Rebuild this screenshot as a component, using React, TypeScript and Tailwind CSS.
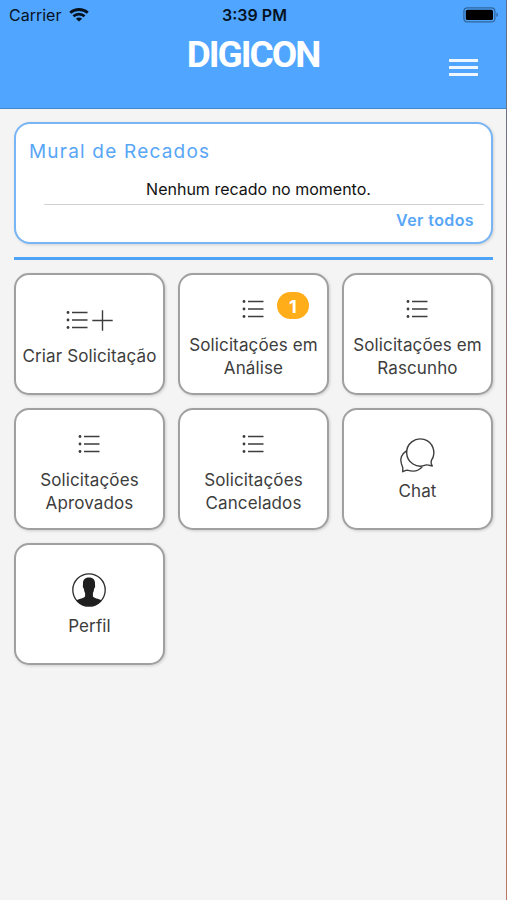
import type { ReactNode } from "react";

function WifiIcon() {
  return (
    <svg width="20" height="14" viewBox="0 0 20 14" fill="none" stroke="#06121f" strokeWidth="2.8">
      <path d="M1.2 4.7C6 0.4 14 0.4 18.8 4.7" />
      <path d="M4.4 8.3c3.200-2.900 8-2.900 11.200 0" />
      <path d="M10 13.600 6.900 10.700c1.800-1.600 4.400-1.600 6.200 0z" fill="#06121f" stroke="none" />
    </svg>
  );
}

function BatteryIcon() {
  return (
    <svg width="37" height="16" viewBox="0 0 37 16">
      <rect x="0.9" y="0.9" width="31" height="14" rx="3.5" fill="none" stroke="#2f659d" strokeWidth="1.2" />
      <rect x="2.8" y="2.7" width="27.2" height="10.4" rx="1.6" fill="#000" />
      <path d="M33.4 5.8c2 .6 2 3.6 0 4.2z" fill="#2f659d" />
    </svg>
  );
}

function ListIcon() {
  return (
    <svg width="22" height="20" viewBox="0 0 22 20" stroke="#3d3d3d" strokeWidth="1.4">
      <path d="M6 2.5h15.5M6 10h15.5M6 17.5h15.5" />
      <g fill="#3d3d3d" stroke="none">
        <circle cx="2" cy="2.5" r="1.4" />
        <circle cx="2" cy="10" r="1.4" />
        <circle cx="2" cy="17.5" r="1.4" />
      </g>
    </svg>
  );
}

function PlusIcon() {
  return (
    <svg width="21" height="21" viewBox="0 0 21 21" stroke="#3d3d3d" strokeWidth="1.4">
      <path d="M10.5 0.3v20.4M0.3 10.5h20.4" />
    </svg>
  );
}

function ChatIcon() {
  return (
    <svg
      className="overflow-visible"
      width="34"
      height="34"
      viewBox="0 0 34 34"
      fill="none"
      stroke="#3d3d3d"
      strokeWidth="1.4"
      strokeLinejoin="round"
    >
      <path d="M32.2 28c-1.200-1.700-1.500-3.600-.8-5.700A13.600 13.600 0 1 0 25.400 27.100c2.400-.7 4.400.4 6.800.9z" />
      <path d="M6.400 12.800C1.600 15.800-.6 21.500 1.500 26c1.400 2.600 1.700 4.500 1.200 7.700 1.500-.3 3-1.700 4.600-1.600 6.200 2 11.600.8 15-3.500" />
    </svg>
  );
}

function ProfileIcon() {
  return (
    <svg width="34" height="34" viewBox="0 0 34 34">
      <circle cx="17" cy="17" r="16.2" fill="#fff" stroke="#2b2b2b" strokeWidth="1.3" />
      <path
        d="M17 4.600c-4.300 0-6.300 2.600-6 6.400.1 1-.4 1.500-.1 2.700.2 1.200.9 1.600 1.100 2.500.2 1.800.5 2.800 1.100 3.700v3.400c-.8 2.200-5.600 2.300-8.700 4.100A16 16 0 0 0 17 33a16 16 0 0 0 12.600-5.600c-3.100-1.800-7.900-1.900-8.700-4.100v-3.400c.6-.9.900-1.900 1.100-3.700.2-.9.900-1.300 1.100-2.500.3-1.200-.2-1.700-.1-2.700.3-3.800-1.700-6.400-6-6.400z"
        fill="#1f1f1f"
      />
    </svg>
  );
}

type TileProps = {
  label: string;
  icon: ReactNode;
  badge?: number;
};

function Tile({ label, icon, badge }: TileProps) {
  return (
    <button className="flex h-[122px] flex-col items-center justify-center rounded-[15px] border-2 border-[#a0a0a0] bg-white px-1 pt-[3px] shadow-[1px_1px_3px_rgba(0,0,0,0.16)]">
      <span className="relative right-[0.5px] flex h-[34px] items-center gap-1">
        {icon}
        {badge !== undefined && (
          <span className="absolute top-0 left-[35px] flex h-[27px] w-[32px] items-center justify-center rounded-full bg-[#ffad18] pt-[3px] text-[18px] leading-[24px] font-bold text-white">
            {badge}
          </span>
        )}
      </span>
      <span className="mt-[8px] text-[17px] leading-[23px] tracking-[0.12px] text-[#3d3d3d]">{label}</span>
    </button>
  );
}

const tiles: TileProps[] = [
  { label: "Criar Solicitação", icon: <><ListIcon /><PlusIcon /></> },
  { label: "Solicitações em Análise", icon: <ListIcon />, badge: 1 },
  { label: "Solicitações em Rascunho", icon: <ListIcon /> },
  { label: "Solicitações Aprovados", icon: <ListIcon /> },
  { label: "Solicitações Cancelados", icon: <ListIcon /> },
  { label: "Chat", icon: <ChatIcon /> },
  { label: "Perfil", icon: <ProfileIcon /> },
];

export default function App() {
  return (
    <div className="flex h-[900px] w-[507px] overflow-hidden bg-[#f4f4f4] font-['Inter',sans-serif]">
      <div className="w-[506px] shrink-0">
        <header className="h-[109px] border-b border-[#4388cc] bg-[#50a6ff]">
          <div className="grid h-[30px] grid-cols-3 items-center pr-[6px] pl-[9px] text-[16px] text-[#06121f]">
            <div className="flex items-center gap-2">
              <span>Carrier</span>
              <WifiIcon />
            </div>
            <span className="text-center font-semibold">3:39 PM</span>
            <div className="flex justify-end">
              <BatteryIcon />
            </div>
          </div>
          <div className="grid grid-cols-[1fr_auto_1fr] pr-[28px] pl-[28px]">
            <span />
            <h1 className="pt-[4px] font-['Roboto',sans-serif] text-[37px] leading-[42px] font-bold tracking-[-2px] text-white">
              DIGICON
            </h1>
            <button className="mt-[29px] flex h-[17px] w-[29px] flex-col justify-between justify-self-end">
              <span className="h-[3px] w-full bg-white/90" />
              <span className="h-[3px] w-full bg-white/90" />
              <span className="h-[3px] w-full bg-white/90" />
            </button>
          </div>
        </header>

        <main className="pt-[13px] pr-[13px] pl-[14px]">
          <section className="h-[122px] rounded-[16px] border-2 border-[#78b5f4] bg-white pt-[15px] pr-[7px] pl-[13px] shadow-[1px_1px_3px_rgba(0,0,0,0.14)]">
            <h2 className="text-[19px] leading-[26px] tracking-[1.2px] text-[#58a6f6]">Mural de Recados</h2>
            <div className="mt-[9px] ml-[15px] flex h-[31px] items-center justify-center border-b border-[#d2d2d2] pr-[11px] text-[16px] text-[#111]">
              Nenhum recado no momento.
            </div>
            <div className="pt-[4px] pr-[10px] text-right text-[16px] leading-[22px] font-semibold tracking-[0.4px] text-[#58a6f6]">
              Ver todos
            </div>
          </section>
          <div className="mt-[13px] h-[3px] bg-[#4da3f7]" />
          <div className="mt-[13px] grid grid-cols-3 gap-[13px]">
            {tiles.map((tile) => (
              <Tile key={tile.label} {...tile} />
            ))}
          </div>
        </main>
      </div>
      <div className="h-full w-px bg-linear-to-b from-[#58708c] via-[#a5776b] to-[#b9786a]" />
    </div>
  );
}
